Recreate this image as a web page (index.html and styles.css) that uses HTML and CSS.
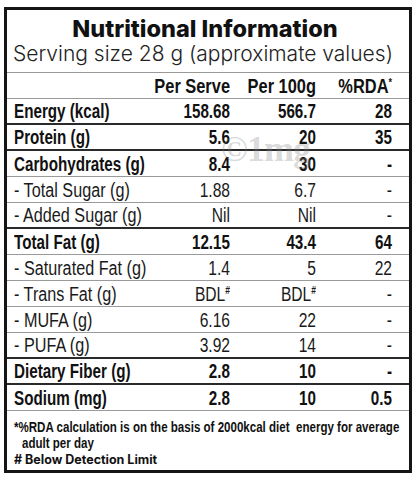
FILE: index.html
```html
<!DOCTYPE html>
<html>
<head>
<meta charset="utf-8">
<link rel="stylesheet" href="styles.css">
</head>
<body>
<div class="label">
  <div class="head">
    <div class="title">Nutritional Information</div>
    <div class="serving">Serving size 28 g (approximate values)</div>
  </div>
  <div class="row colhead">
    <span class="l"></span><span class="v">Per Serve</span><span class="v">Per 100g</span><span class="v">%RDA<sup>*</sup></span>
  </div>
  <div class="row major dark"><span class="l">Energy (kcal)</span><span class="v">158.68</span><span class="v">566.7</span><span class="v">28</span></div>
  <div class="row major dark"><span class="l">Protein (g)</span><span class="v">5.6</span><span class="v">20</span><span class="v">35</span></div>
  <div class="row major"><span class="l">Carbohydrates (g)</span><span class="v">8.4</span><span class="v">30</span><span class="v">-</span></div>
  <div class="row sub"><span class="l">- Total Sugar (g)</span><span class="v">1.88</span><span class="v">6.7</span><span class="v">-</span></div>
  <div class="row sub dark"><span class="l">- Added Sugar (g)</span><span class="v">Nil</span><span class="v">Nil</span><span class="v">-</span></div>
  <div class="row major"><span class="l">Total Fat (g)</span><span class="v">12.15</span><span class="v">43.4</span><span class="v">64</span></div>
  <div class="row sub"><span class="l">- Saturated Fat (g)</span><span class="v">1.4</span><span class="v">5</span><span class="v">22</span></div>
  <div class="row sub"><span class="l">- Trans Fat (g)</span><span class="v">BDL<sup>#</sup></span><span class="v">BDL<sup>#</sup></span><span class="v">-</span></div>
  <div class="row sub"><span class="l">- MUFA (g)</span><span class="v">6.16</span><span class="v">22</span><span class="v">-</span></div>
  <div class="row sub dark"><span class="l">- PUFA (g)</span><span class="v">3.92</span><span class="v">14</span><span class="v">-</span></div>
  <div class="row major dark"><span class="l">Dietary Fiber (g)</span><span class="v">2.8</span><span class="v">10</span><span class="v">-</span></div>
  <div class="row major"><span class="l">Sodium (mg)</span><span class="v">2.8</span><span class="v">10</span><span class="v">0.5</span></div>
  <div class="foot">
    <p class="note"><span class="line">*%RDA calculation is on the basis of 2000kcal diet&nbsp; energy for average</span></p>
    <p class="note"><span class="line indent">adult per day</span></p>
    <p class="bdl"># Below Detection Limit</p>
  </div>
  <div class="watermark">©1mg</div>
</div>
</body>
</html>
```
FILE: styles.css
```css
html, body {
  margin: 0;
  padding: 0;
  background: #fff;
  overflow: hidden;
}
.label {
  position: relative;
  box-sizing: border-box;
  width: 408px;
  height: 466px;
  margin: 7px 0 0 4px;
  border: 3px solid #151515;
  color: #111;
  font-family: "Liberation Sans", Arial, sans-serif;
  overflow: hidden;
}
.head {
  box-sizing: border-box;
  height: 63px;
  border-bottom: 1px solid #999;
  text-align: center;
  padding-top: 6px;
}
.title {
  font-family: "Inter", sans-serif;
  font-weight: 800;
  font-size: 23.5px;
  line-height: 26px;
  margin-left: -6px;
}
.serving {
  font-family: "Inter", sans-serif;
  font-weight: 300;
  font-size: 21px;
  line-height: 24px;
  color: #222;
  margin-left: -10px;
}
.row {
  box-sizing: border-box;
  display: grid;
  grid-template-columns: minmax(0, 1fr) 100px 86px 76px;
  align-items: center;
  height: 26px;
  padding: 0 17px 0 7px;
  border-bottom: 1px solid #9a9a9a;
  font-size: 20px;
}
.row.dark {
  border-bottom: 2px solid #2a2a2a;
}
.row > span {
  display: block;
  white-space: nowrap;
  line-height: 22px;
  min-width: 0;
}
.row .l {
  transform: scaleX(0.76);
  transform-origin: left center;
}
.row .v {
  text-align: right;
  transform: scaleX(0.76);
  transform-origin: right center;
}
.colhead {
  font-weight: 700;
}
.colhead .v {
  transform: scaleX(0.82);
}
.major {
  font-weight: 700;
}
.sub {
  font-weight: 400;
  color: #1a1a1a;
}
.sub .l {
  transform: scaleX(0.81);
}
.sub .v {
  transform: scaleX(0.78);
}
sup {
  font-size: 11px;
  line-height: 0;
  vertical-align: 7px;
  font-weight: 700;
}
.foot {
  padding: 8px 8px 0 7px;
  overflow: hidden;
}
.foot p {
  margin: 0;
}
.note {
  font-weight: 700;
  font-size: 15px;
  line-height: 16px;
  white-space: nowrap;
}
.line {
  display: inline-block;
  transform: scaleX(0.77);
  transform-origin: left center;
}
.indent {
  margin-left: 8px;
}
.bdl {
  font-family: "Inter", sans-serif;
  font-weight: 700;
  font-size: 12.5px;
  line-height: 18px;
  margin-top: 2px;
}
.watermark {
  position: absolute;
  left: 214px;
  top: 121px;
  font-family: "Liberation Serif", serif;
  font-weight: 700;
  font-size: 36px;
  line-height: 36px;
  color: rgba(130, 130, 130, 0.3);
  letter-spacing: -1px;
}
```
